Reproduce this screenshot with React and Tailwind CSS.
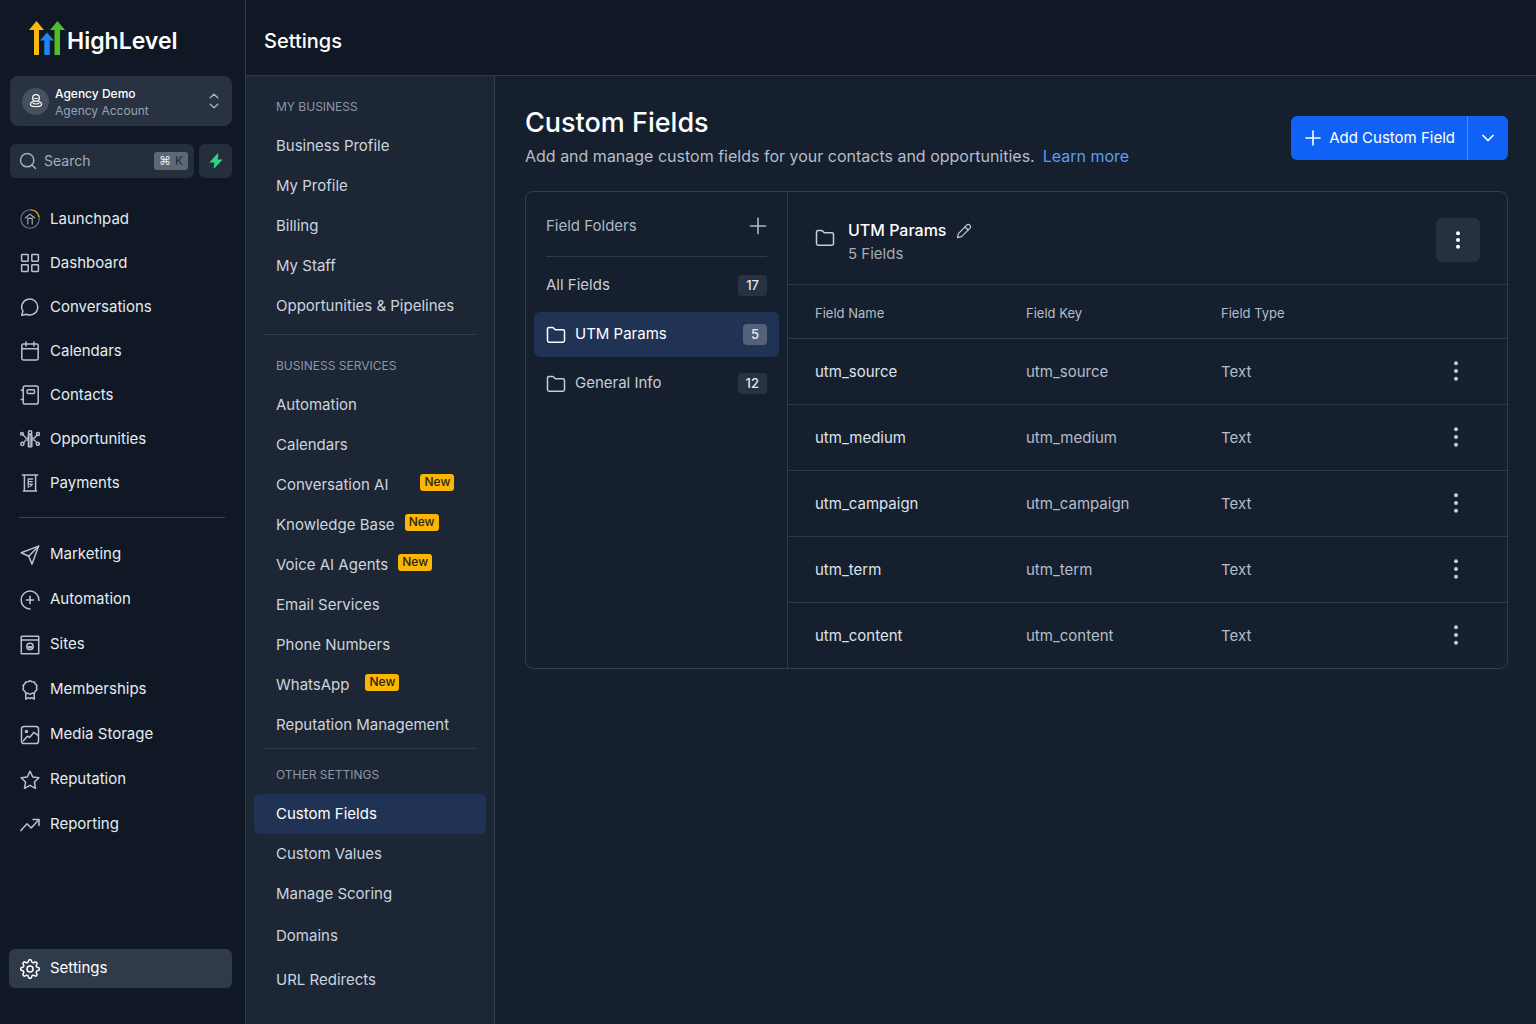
import clsx from 'clsx';
import { ChevronDown, Plus, Search } from 'lucide-react';

function Glyph({ children, className = 'size-5' }) {
  return (
    <svg
      viewBox="0 0 20 20"
      fill="none"
      stroke="currentColor"
      strokeWidth="1.5"
      strokeLinecap="round"
      strokeLinejoin="round"
      className={className}
      aria-hidden
    >
      {children}
    </svg>
  );
}

function LaunchpadIcon() {
  return (
    <Glyph>
      <g stroke="#6b7686" strokeWidth="1.1">
        <path d="M10 .8A9.2 9.2 0 1 0 19.2 10" />
        <path d="M19.2 10A9.2 9.2 0 0 0 18.6 6.8" />
      </g>
      <path d="M11 .9a9.2 9.2 0 0 1 8 6.6" stroke="#d9a227" strokeWidth="1.4" />
      <g stroke="#a7b1bf" strokeWidth="1.1">
        <path d="M5.4 9 10 5.2 14.6 9" />
        <path d="M7.8 9v6M12.2 9v6M7.8 9.4h4.400" />
      </g>
    </Glyph>
  );
}

function DashboardIcon() {
  return (
    <Glyph>
      <rect x="1.6" y="1.6" width="6.6" height="6.6" rx="0.6" />
      <rect x="11.8" y="1.6" width="6.6" height="6.6" rx="0.6" />
      <rect x="1.6" y="11.8" width="6.6" height="6.6" rx="0.6" />
      <rect x="11.8" y="11.8" width="6.6" height="6.6" rx="0.6" />
    </Glyph>
  );
}

function ConversationsIcon() {
  return (
    <Glyph>
      <path d="M2.9 14.2A8 8 0 1 1 6.4 17.3L1.7 18.3Z" />
    </Glyph>
  );
}

function CalendarIcon() {
  return (
    <Glyph>
      <rect x="1.8" y="2.9" width="16.4" height="16" rx="1.6" />
      <path d="M1.8 7.8h16.4M6 .9v4M14 .9v4" />
    </Glyph>
  );
}

function ContactsIcon() {
  return (
    <Glyph>
      <rect x="3.2" y="1" width="15" height="18" rx="1.8" />
      <rect x="7" y="4.8" width="7.6" height="3.8" rx="1.4" />
      <path d="M1.2 5.2h2M1.2 14.6h2" />
    </Glyph>
  );
}

function OpportunitiesIcon() {
  return (
    <Glyph>
      <rect x="8.4" y="5.4" width="3.4" height="12.4" rx="0.5" />
      <circle cx="10.1" cy="3.4" r="1.700" />
      <path d="M10.1 6v11" strokeWidth="1.200" />
      <circle cx="2" cy="4.800" r="1.300" />
      <circle cx="2.400" cy="14.800" r="1.600" />
      <circle cx="18" cy="5" r="1.500" />
      <circle cx="17.800" cy="14.800" r="1.500" />
      <path d="M3.200 5.800 6 9.200h2.400M3.600 13.600 6 10.800h2.400M16.800 6.200l-2.600 3h-2.400M16.600 13.600l-2.400-2.800h-2.400" strokeWidth="1.300" />
    </Glyph>
  );
}

function PaymentsIcon() {
  return (
    <Glyph>
      <path d="M2.4 1.9h15.2M4.4 1.9v15.8M15.6 1.9v15.8M3.4 17.9h13.2" />
      <path d="M8.2 14.3V6h4.4M8.2 8.6h4M8.2 11.2h3.6M10 13.6l2.4-2.4" strokeWidth="1.3" />
    </Glyph>
  );
}

function MarketingIcon() {
  return (
    <Glyph>
      <path d="M18.6 1.1 1.2 7.7l7.6 3.6 3.2 7.8Z" />
      <path d="M18.6 1.1 8.8 11.3" />
    </Glyph>
  );
}

function AutomationIcon() {
  return (
    <Glyph>
      <path d="M18.9 10.6A8.9 8.9 0 1 0 10 18.9" />
      <path d="M10 6.4v7.2M6.4 10h7.2" strokeWidth="1.6" />
    </Glyph>
  );
}

function SitesIcon() {
  return (
    <Glyph>
      <rect x="1.3" y="1.2" width="17.4" height="17.6" rx="0.6" />
      <path d="M1.3 5h17.4" />
      <circle cx="10" cy="11.4" r="3.2" />
      <path d="M7.6 11h4.8a2.4 2.4 0 0 1-4.8 0Z" fill="currentColor" stroke="none" />
    </Glyph>
  );
}

function MembershipsIcon() {
  return (
    <Glyph>
      <path d="M10 .8 12 1.7l2.3.2.9 2 1.7 1.5-.4 2.2.4 2.1-1.7 1.5-.9 2-2.3.1-2 1-2-1-2.3-.1-.9-2-1.7-1.5.4-2.1-.4-2.2 1.7-1.5.9-2L8 1.7Z" />
      <path d="M5.8 13.2v6l2.6-1.5 1.6 1 1.6-1 2.6 1.5v-6" />
    </Glyph>
  );
}

function MediaIcon() {
  return (
    <Glyph>
      <rect x="1.5" y="1.5" width="17" height="17" rx="2.6" />
      <circle cx="6.4" cy="6.4" r="1" />
      <path d="m3.4 15.8 4-4.6 2.2 1.2 4.2-5 4.6 3.2" />
    </Glyph>
  );
}

function ReputationIcon() {
  return (
    <Glyph>
      <path d="m10 1.2 2.7 5.700 6.200.8-4.500 4.300 1.100 6.300L10 15.300l-5.500 3 1.100-6.300L1.100 7.700l6.200-.8Z" />
    </Glyph>
  );
}

function ReportingIcon() {
  return (
    <Glyph>
      <path d="M.9 15.600 7 8.800l4.200 4.200 7.600-8.200" />
      <path d="M13 4.600h6v5.800" />
    </Glyph>
  );
}

// eight soft teeth around the hub
const GEAR_POINTS = Array.from({ length: 96 }, (_, i) => {
  const angle = (i / 96) * Math.PI * 2;
  const radius = 8.100 + 1.200 * Math.tanh(2 * Math.cos(angle * 8));
  return `${(10 + radius * Math.sin(angle)).toFixed(2)},${(10 - radius * Math.cos(angle)).toFixed(2)}`;
}).join(' ');

function SettingsIcon() {
  return (
    <Glyph>
      <polygon points={GEAR_POINTS} />
      <circle cx="10" cy="10" r="3" />
    </Glyph>
  );
}

function AvatarIcon() {
  return (
    <Glyph className="size-4">
      <circle cx="10" cy="6.2" r="4.2" />
      <path d="M7.6 6.6c1.5.7 3.3.7 4.8 0" strokeWidth="1.2" />
      <path d="M6.4 10.6c-2.2.8-3.4 1.8-3.4 3.2 0 2 3.2 3.4 7 3.4s7-1.4 7-3.4c0-1.4-1.2-2.4-3.4-3.2" />
      <path d="M6.4 12.6c1.2 1.5 6 1.5 7.2 0" />
    </Glyph>
  );
}

function FolderIcon() {
  return (
    <Glyph>
      <path d="M1.500 4a1.600 1.600 0 0 1 1.600-1.600h3.300a1.600 1.600 0 0 1 1.200.5l1.700 1.900h7.600A1.600 1.600 0 0 1 18.500 6.400v9.200a1.600 1.600 0 0 1-1.600 1.600H3.100a1.600 1.600 0 0 1-1.600-1.600Z" />
    </Glyph>
  );
}

function PencilIcon() {
  return (
    <Glyph className="size-4">
      <path d="M1.800 18.200 3 13.200 13.300 2.700a2.700 2.700 0 0 1 4 0 2.700 2.700 0 0 1 0 4L6.900 17Z" />
      <path d="m11.300 4.800 3.900 3.900" />
    </Glyph>
  );
}

function SortIcon() {
  return (
    <svg
      viewBox="0 0 10 16"
      className="h-4 w-2.5 text-[#aab3bf]"
      fill="none"
      stroke="currentColor"
      strokeWidth="1.4"
      strokeLinecap="round"
      strokeLinejoin="round"
      aria-hidden
    >
      <path d="M1.2 4.8 5 1.2l3.8 3.6M1.2 11.200 5 14.800l3.800-3.600" />
    </svg>
  );
}

function Dots({ gap }) {
  return (
    <svg viewBox="0 0 8 20" className="h-5 w-2" fill="currentColor" aria-hidden>
      <circle cx="4" cy={10 - gap} r="2" />
      <circle cx="4" cy="10" r="2" />
      <circle cx="4" cy={10 + gap} r="2" />
    </svg>
  );
}

function Logo() {
  return (
    <a href="#home" className="flex items-end gap-0.5 pl-[29px]">
      <svg viewBox="0 0 36 34" className="h-[34px] w-9" aria-hidden>
        <path d="M7.5 0 15 9H10v25H5V9H0Z" fill="#fbb713" />
        <path d="M28.5 0 36 9h-5v25h-5.5V9H21Z" fill="#4fbf26" />
        <path d="M18 11.5 25 19.5h-4.3V34h-5.4V19.5H11Z" fill="#1f86f0" />
      </svg>
      <span className="text-[23px] leading-7 font-semibold text-white">HighLevel</span>
    </a>
  );
}

const PRIMARY_LINKS = [
  { label: 'Launchpad', icon: LaunchpadIcon },
  { label: 'Dashboard', icon: DashboardIcon },
  { label: 'Conversations', icon: ConversationsIcon },
  { label: 'Calendars', icon: CalendarIcon },
  { label: 'Contacts', icon: ContactsIcon },
  { label: 'Opportunities', icon: OpportunitiesIcon },
  { label: 'Payments', icon: PaymentsIcon },
];

const SECONDARY_LINKS = [
  { label: 'Marketing', icon: MarketingIcon },
  { label: 'Automation', icon: AutomationIcon },
  { label: 'Sites', icon: SitesIcon },
  { label: 'Memberships', icon: MembershipsIcon },
  { label: 'Media Storage', icon: MediaIcon },
  { label: 'Reputation', icon: ReputationIcon },
  { label: 'Reporting', icon: ReportingIcon },
];

const SETTINGS_GROUPS = [
  {
    title: 'My Business',
    items: [
      { label: 'Business Profile' },
      { label: 'My Profile' },
      { label: 'Billing' },
      { label: 'My Staff' },
      { label: 'Opportunities & Pipelines' },
    ],
  },
  {
    title: 'Business Services',
    divider: 'mt-2 mb-[18px]',
    items: [
      { label: 'Automation' },
      { label: 'Calendars' },
      { label: 'Conversation AI', badge: 'ml-8' },
      { label: 'Knowledge Base', badge: 'ml-2.5' },
      { label: 'Voice AI Agents', badge: 'ml-2.5' },
      { label: 'Email Services' },
      { label: 'Phone Numbers' },
      { label: 'WhatsApp', badge: 'ml-4' },
      { label: 'Reputation Management' },
    ],
  },
  {
    title: 'Other Settings',
    divider: 'mt-[3px] mb-[13px]',
    items: [
      { label: 'Custom Fields', active: true },
      { label: 'Custom Values' },
      { label: 'Manage Scoring' },
      { label: 'Domains', tall: true },
      { label: 'URL Redirects', tall: true },
    ],
  },
];

const FOLDERS = [
  { label: 'All Fields', count: 17, plain: true },
  { label: 'UTM Params', count: 5, active: true },
  { label: 'General Info', count: 12 },
];

const FIELDS = [
  { name: 'utm_source', key: 'utm_source', type: 'Text' },
  { name: 'utm_medium', key: 'utm_medium', type: 'Text' },
  { name: 'utm_campaign', key: 'utm_campaign', type: 'Text' },
  { name: 'utm_term', key: 'utm_term', type: 'Text' },
  { name: 'utm_content', key: 'utm_content', type: 'Text' },
];

function SidebarLinks({ links, rowClass }) {
  return (
    <ul>
      {links.map(({ label, icon: Icon }) => (
        <li key={label}>
          <a href="#nav" className={clsx('flex items-center gap-2.5 px-5 text-[15px] text-[#e6ebf2]', rowClass)}>
            <span className="text-[#b9c2ce]">
              <Icon />
            </span>
            {label}
          </a>
        </li>
      ))}
    </ul>
  );
}

function Sidebar() {
  return (
    <aside className="flex w-[246px] shrink-0 flex-col border-r border-[#323c4a] bg-[#0f1824] pt-[21px] pb-9">
      <Logo />
      <button
        type="button"
        className="mt-[21px] mr-[13px] ml-2.5 flex h-[50px] items-center rounded-lg bg-[#283241] pr-[13px] pl-3 text-left"
      >
        <span className="flex size-[27px] items-center justify-center rounded-full bg-[#46505e] text-white">
          <AvatarIcon />
        </span>
        <span className="ml-1.5 flex-1 pt-px">
          <span className="block text-xs leading-[17px] font-medium text-white">Agency Demo</span>
          <span className="block text-xs leading-[17px] text-[#98a2b0]">Agency Account</span>
        </span>
        <SortIcon />
      </button>
      <div className="mt-[18px] mr-[13px] ml-2.5 flex h-[34px] gap-[5px]">
        <label className="flex min-w-0 flex-1 items-center rounded-md bg-[#242e3c] pr-1.5 pl-2 text-[#a3adb9]">
          <Search className="size-5 shrink-0" strokeWidth={1.8} aria-hidden />
          <input
            type="search"
            aria-label="Search"
            placeholder="Search"
            className="ml-1.5 w-full min-w-0 bg-transparent text-sm outline-none placeholder:text-[#a3adb9]"
          />
          <kbd className="flex h-[18px] w-[34px] shrink-0 items-center justify-center gap-1 rounded-[3px] bg-[#5e6875] font-[Inter,sans-serif] text-xs text-[#e3e7ec]">
            <span>⌘</span>
            <span className="text-[#1f2937]">K</span>
          </kbd>
        </label>
        <button
          type="button"
          aria-label="Quick actions"
          className="flex w-[33px] items-center justify-center rounded-md bg-[#242e3c]"
        >
          <svg viewBox="0 0 14 16" className="h-4 w-3.5" fill="#2fd38a" aria-hidden>
            <path d="M8.6.6 1 8.7c-.3.3-.1.8.3.8h4.1L4.7 15c0 .5.5.7.8.3L13 7.2c.3-.3.1-.8-.3-.8H8.7L9.4 1c.1-.5-.5-.7-.8-.4Z" />
          </svg>
        </button>
      </div>
      <nav className="mt-[19px] flex flex-1 flex-col">
        <SidebarLinks links={PRIMARY_LINKS} rowClass="h-11" />
        <hr className="mt-3 mr-5 mb-3.5 ml-[19px] border-[#3a4553]" />
        <SidebarLinks links={SECONDARY_LINKS} rowClass="h-[45px]" />
        <a
          href="#settings"
          className="mt-auto mr-[13px] ml-[9px] flex h-[39px] items-center gap-2.5 rounded-md bg-[#2f3a4b] px-[11px] text-[15px] text-white"
        >
          <SettingsIcon />
          Settings
        </a>
      </nav>
    </aside>
  );
}

function SettingsNav() {
  return (
    <nav className="w-[249px] shrink-0 border-r border-[#343f4d] bg-[#1c2634] px-2 pt-[18px]">
      {SETTINGS_GROUPS.map((group) => (
        <section key={group.title}>
          {group.divider ? <hr className={clsx('mx-2.5 border-[#313c4a]', group.divider)} /> : null}
          <h2 className="flex h-[26px] items-center pl-[22px] text-xs text-[#8c97a6] uppercase">{group.title}</h2>
          <ul className="mt-1.5">
            {group.items.map((item) => (
              <li key={item.label}>
                <a
                  href="#section"
                  className={clsx(
                    'flex items-center rounded-md pl-[22px] text-[15px] whitespace-nowrap',
                    item.tall ? 'h-11' : 'h-10',
                    item.active ? 'bg-[#213355] text-white' : 'text-[#ccd4df]'
                  )}
                >
                  {item.label}
                  {item.badge ? (
                    <span
                      className={clsx(
                        'mb-1.5 flex h-[17px] w-[34px] items-center justify-center rounded-[3px] bg-[#fbb504] text-xs font-medium text-[#2b2410]',
                        item.badge
                      )}
                    >
                      New
                    </span>
                  ) : null}
                </a>
              </li>
            ))}
          </ul>
        </section>
      ))}
    </nav>
  );
}

function FolderList() {
  return (
    <div className="w-[262px] shrink-0 border-r border-[#303b49] px-2">
      <div className="mx-3 flex h-[65px] items-center justify-between border-b border-[#303b49] pt-1 text-[#aeb7c4]">
        <h2 className="text-[15px]">Field Folders</h2>
        <button type="button" aria-label="Add folder" className="-mr-1">
          <Plus className="size-[26px]" strokeWidth={1.5} aria-hidden />
        </button>
      </div>
      <ul className="mt-1.5">
        {FOLDERS.map((folder) => (
          <li key={folder.label} className="mb-1">
            <a
              href="#folder"
              className={clsx(
                'flex h-[45px] items-center gap-[9px] rounded-md px-3 text-[15px]',
                folder.active ? 'bg-[#213355] text-white' : 'text-[#c5cdd8]'
              )}
            >
              {folder.plain ? null : <FolderIcon />}
              <span className="flex-1">{folder.label}</span>
              <span
                className={clsx(
                  'flex h-[21px] items-center justify-center rounded-[4px] px-2 text-[13px] font-medium text-[#e3e8ef]',
                  folder.active ? 'bg-[#53617b]' : 'bg-[#283241]'
                )}
              >
                {folder.count}
              </span>
            </a>
          </li>
        ))}
      </ul>
    </div>
  );
}

function FieldTable() {
  return (
    <div className="min-w-0 flex-1">
      <div className="flex h-[93px] items-center border-b border-[#303b49] px-[27px] pt-1">
        <span className="mb-1 text-[#c5cdd8]">
          <FolderIcon />
        </span>
        <div className="ml-[13px] flex-1 pt-1">
          <div className="flex items-center gap-2.5">
            <h2 className="text-base leading-[23px] font-medium text-white">UTM Params</h2>
            <button type="button" aria-label="Rename folder" className="text-[#c5cdd8]">
              <PencilIcon />
            </button>
          </div>
          <p className="text-[15px] leading-[23px] text-[#a3adb9]">5 Fields</p>
        </div>
        <button
          type="button"
          aria-label="Folder actions"
          className="flex size-11 items-center justify-center rounded-md bg-[#263140] text-white"
        >
          <Dots gap={6.7} />
        </button>
      </div>
      <table className="w-full table-fixed text-left text-[15px]">
        <colgroup>
          <col className="w-[238px]" />
          <col className="w-[195px]" />
          <col />
          <col className="w-[103px]" />
        </colgroup>
        <thead>
          <tr className="h-[53px] border-b border-[#303b49] text-[13px] text-[#b4bdc9]">
            <th className="pt-1 pl-[27px] font-normal">Field Name</th>
            <th className="pt-1 font-normal">Field Key</th>
            <th className="pt-1 font-normal">Field Type</th>
            <th aria-label="Actions" />
          </tr>
        </thead>
        <tbody>
          {FIELDS.map((field) => (
            <tr key={field.name} className="h-[66px] border-b border-[#303b49] last:border-b-0">
              <td className="pt-0.5 pl-[27px] text-[#dde3eb]">{field.name}</td>
              <td className="pt-0.5 text-[#b4bdc9]">{field.key}</td>
              <td className="pt-0.5 text-[#b4bdc9]">{field.type}</td>
              <td>
                <button
                  type="button"
                  aria-label={`Actions for ${field.name}`}
                  className="mx-auto flex size-8 items-center justify-center text-[#c5cdd8]"
                >
                  <Dots gap={7.7} />
                </button>
              </td>
            </tr>
          ))}
        </tbody>
      </table>
    </div>
  );
}

export default function App() {
  return (
    <div className="flex min-h-screen bg-[#161f2d] font-[Inter,sans-serif]">
      <Sidebar />
      <div className="flex min-w-0 flex-1 flex-col">
        <header className="flex h-[76px] items-center border-b border-[#2f3946] bg-[#0f1824] px-[18px] pt-[6px]">
          <p className="text-xl font-medium text-white">Settings</p>
        </header>
        <div className="flex flex-1">
          <SettingsNav />
          <main className="min-w-0 flex-1 pt-[29px] pr-7 pl-[30px]">
            <div className="flex items-center justify-between">
              <div>
                <h1 className="text-[27px] leading-9 font-medium text-white">Custom Fields</h1>
                <p className="text-base leading-[30px] text-[#b4bdc9]">
                  Add and manage custom fields for your contacts and opportunities.
                  <a href="#learn" className="ml-2 text-[#5b9cf6]">
                    Learn more
                  </a>
                </p>
              </div>
              <div className="flex h-11 overflow-hidden rounded-md bg-[#0f62f5] text-white">
                <button type="button" className="flex items-center gap-1 pr-3 pl-2.5 text-[15px]">
                  <Plus className="size-6" strokeWidth={1.6} aria-hidden />
                  Add Custom Field
                </button>
                <button
                  type="button"
                  aria-label="More options"
                  className="flex w-[41px] items-center justify-center border-l border-[#4a8bfa]"
                >
                  <ChevronDown className="size-5" strokeWidth={2} aria-hidden />
                </button>
              </div>
            </div>
            <div className="mt-5 flex rounded-lg border border-[#323d4b]">
              <FolderList />
              <FieldTable />
            </div>
          </main>
        </div>
      </div>
    </div>
  );
}
